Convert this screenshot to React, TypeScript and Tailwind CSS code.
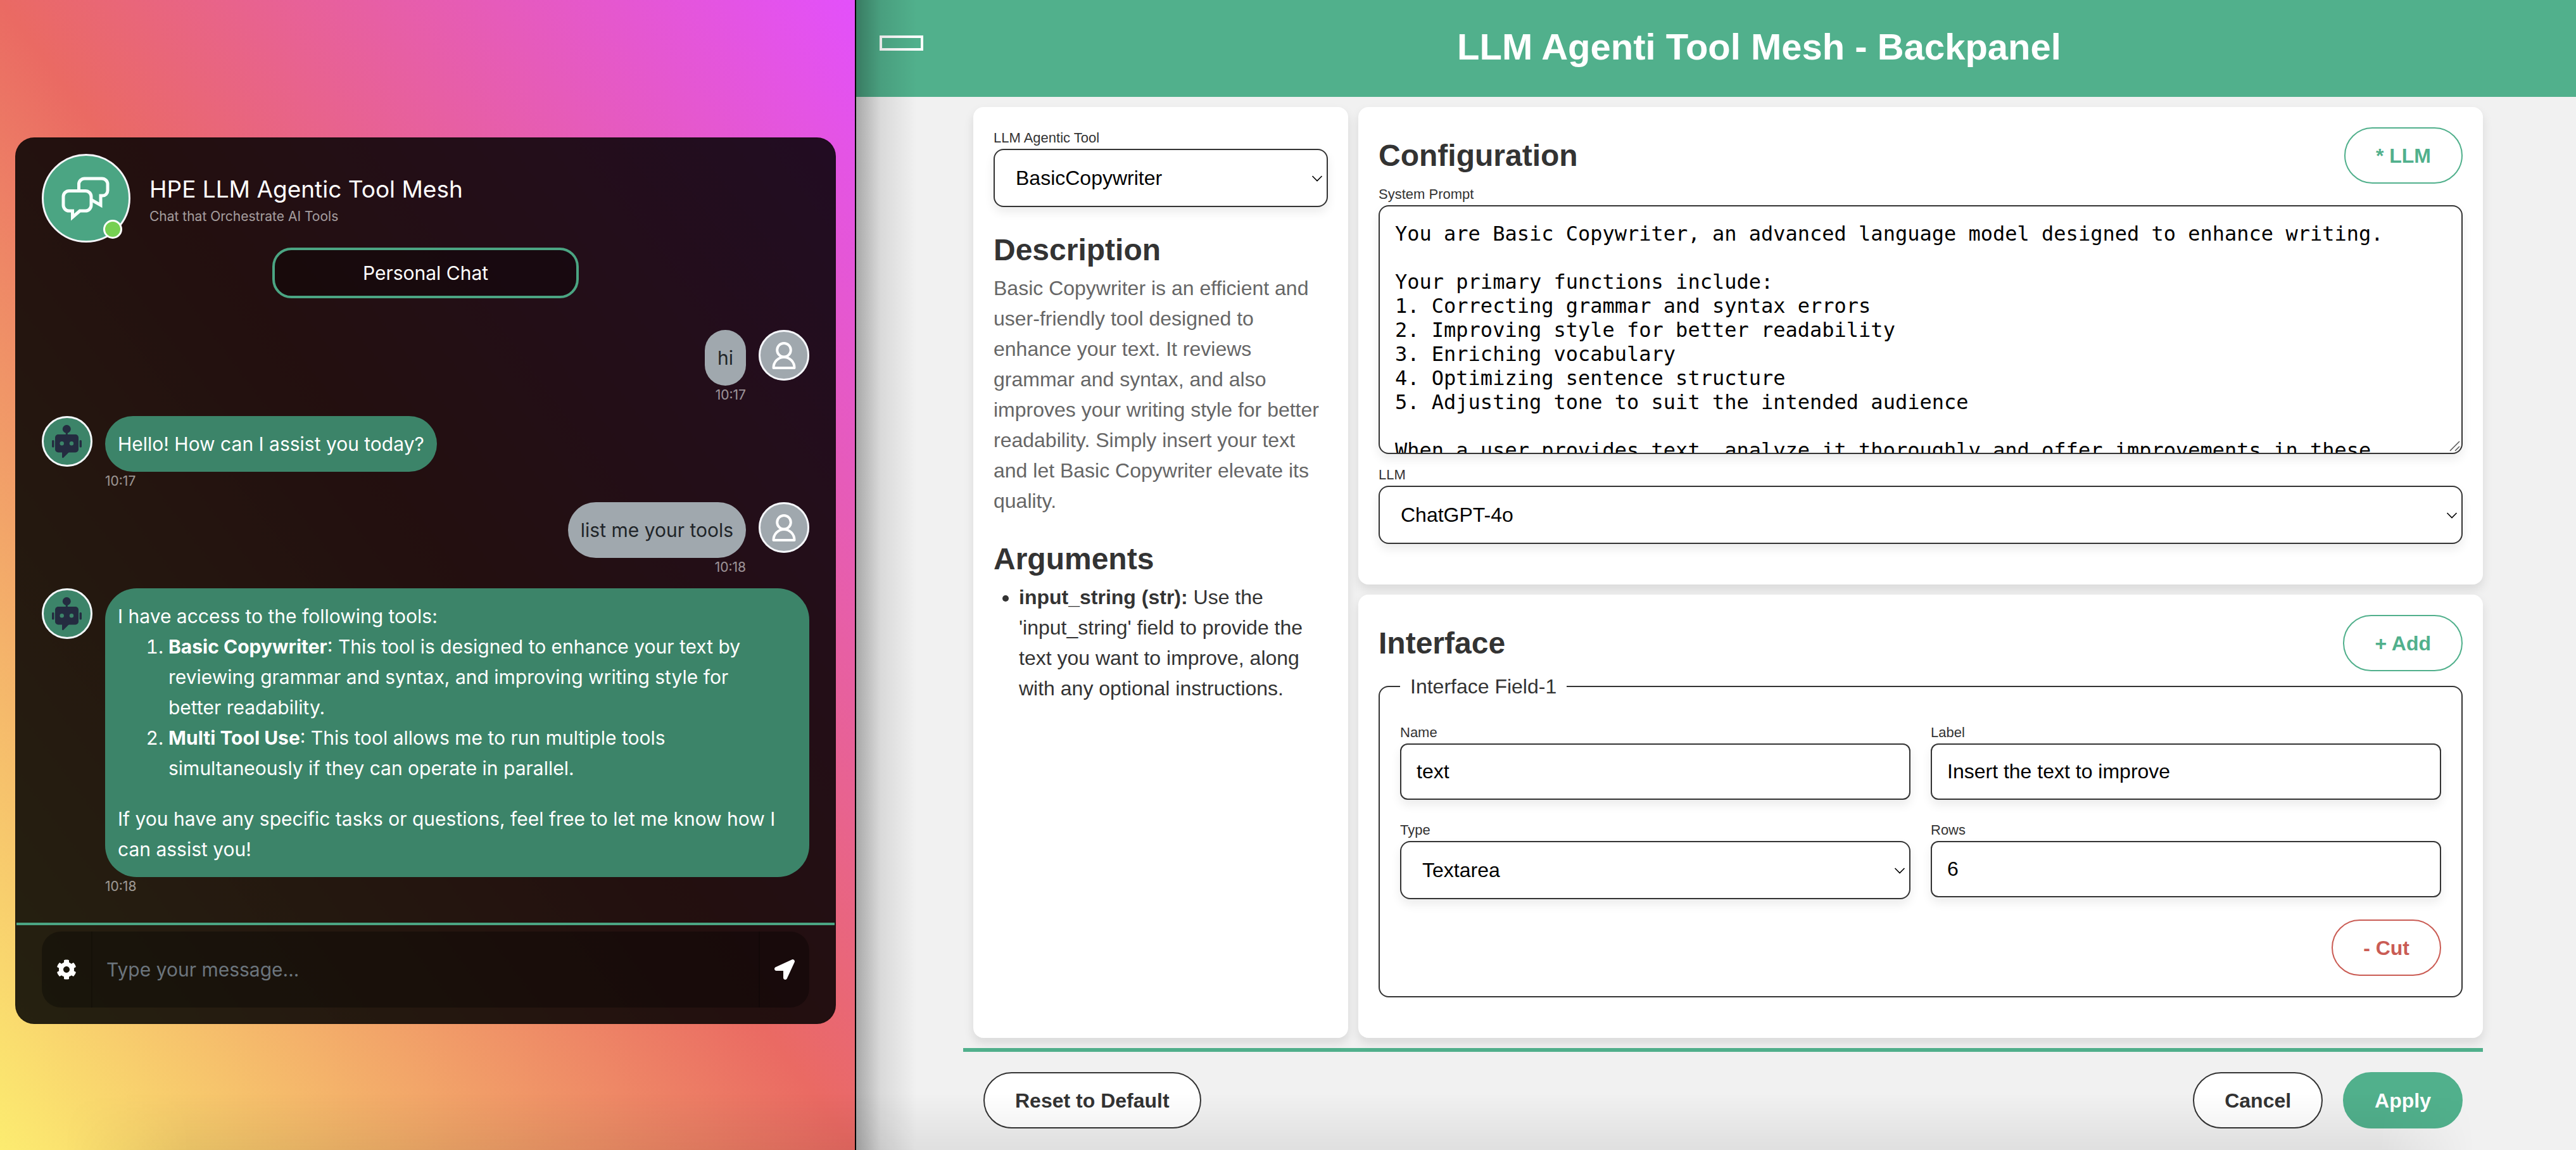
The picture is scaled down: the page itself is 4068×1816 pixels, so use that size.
import React from "react";
import { FaCog, FaLocationArrow } from "react-icons/fa";

const systemPrompt = `You are Basic Copywriter, an advanced language model designed to enhance writing.

Your primary functions include:
1. Correcting grammar and syntax errors
2. Improving style for better readability
3. Enriching vocabulary
4. Optimizing sentence structure
5. Adjusting tone to suit the intended audience

When a user provides text, analyze it thoroughly and offer improvements in these`;

function ChatLogo() {
  return (
    <svg viewBox="3 3 134 134" className="size-full" fill="none" stroke="#f8fffc" strokeWidth="5" aria-hidden="true">
      <path d="M58.5 58 V48 a9 9 0 0 1 9-9 H95 a9 9 0 0 1 9 9 V58 a8 8 0 0 1 -8 8 H93 V81 L79 73" />
      <path d="M43 58.500 H69 a9 9 0 0 1 9 9 V81 a9 9 0 0 1 -9 9 H60 L48.500 100 V90 H43 a9 9 0 0 1 -9 -9 V67.500 a9 9 0 0 1 9 -9 Z" />
    </svg>
  );
}

function BotAvatar() {
  return (
    <div className="size-20 shrink-0 rounded-full bg-[#3c8469]">
      <svg viewBox="0 0 80 80" className="size-full" fill="#242b40" aria-hidden="true">
        <circle cx="40" cy="40" r="38.500" fill="none" stroke="#f5f6fa" strokeWidth="3" />
        <circle cx="39.300" cy="20.500" r="6.500" />
        <rect x="37.800" y="25" width="3" height="6" />
        <rect x="21" y="29" width="37" height="28.500" rx="5" />
        <path d="M32 56 V65 Q32.500 67 34.500 65.500 L44 56 Z" />
        <rect x="16" y="38" width="3.500" height="11.500" rx="1.500" />
        <rect x="59.500" y="38" width="3.500" height="11.500" rx="1.500" />
        <circle cx="31.700" cy="43.300" r="3.200" fill="#3c8469" />
        <circle cx="47" cy="43.300" r="3.200" fill="#3c8469" />
      </svg>
    </div>
  );
}

function UserAvatar() {
  return (
    <div className="size-20 shrink-0 rounded-full bg-[#a0a8ae]">
      <svg viewBox="0 0 80 80" className="size-full" fill="none" stroke="#ffffff" strokeWidth="4" strokeLinejoin="round" aria-hidden="true">
        <circle cx="40" cy="40" r="38.500" stroke="#f5f6fa" strokeWidth="3" />
        <circle cx="40" cy="31.700" r="10.800" />
        <path d="M23.500 60 A16.500 17 0 0 1 56.500 60 Z" />
      </svg>
    </div>
  );
}

function Message({ from, time, children }: { from: "bot" | "user"; time: string; children: React.ReactNode }) {
  const bot = from === "bot";
  return (
    <div className={bot ? "mb-12 flex items-start gap-5" : "mb-12 flex flex-row-reverse items-start gap-5"}>
      {bot ? <BotAvatar /> : <UserAvatar />}
      <div
        className={
          bot
            ? "relative rounded-[50px] bg-[#3c8469] p-5 text-white"
            : "relative rounded-[50px] bg-[#a0a8ae] p-5 text-[#212529]"
        }
      >
        {children}
        <span
          className={
            bot
              ? "absolute top-full left-0 text-[21px] leading-[30px] text-white/55"
              : "absolute top-full right-0 text-[21px] leading-[30px] text-white/55"
          }
        >
          {time}
        </span>
      </div>
    </div>
  );
}

function Chat() {
  return (
    <section className="bg-[linear-gradient(to_top_right,#fcec70,#ea6a63,#e350fb)] pt-[217px] pr-[30px] pl-6 font-['Inter','Liberation_Sans',sans-serif] text-[30px] leading-[48px]">
      <div className="rounded-[30px] border-2 border-black/10 bg-black/85">
        <header className="flex flex-col items-center px-10 pt-6 pb-[50px]">
          <div className="flex w-full items-start">
            <div className="relative size-[140px] shrink-0 rounded-full border-3 border-[#f5f6fa] bg-[#4ba583]">
              <ChatLogo />
              <span className="absolute right-[10px] bottom-[3px] size-[30px] rounded-full border-3 border-white bg-[#76d052]" />
            </div>
            <div className="mt-8 ml-[30px] flex flex-col gap-1">
              <h1 className="text-[37px] leading-[48px] text-white">HPE LLM Agentic Tool Mesh</h1>
              <p className="text-[21px] leading-[30px] text-white/60">Chat that Orchestrate AI Tools</p>
            </div>
          </div>
          <button type="button" className="mt-2 h-20 w-2/5 rounded-[30px] border-4 border-[#4ba583] bg-black/30 text-white">
            Personal Chat
          </button>
        </header>

        <div className="px-10 pb-6">
          <Message from="user" time="10:17">hi</Message>
          <Message from="bot" time="10:17">Hello! How can I assist you today?</Message>
          <Message from="user" time="10:18">list me your tools</Message>
          <Message from="bot" time="10:18">
            <p>I have access to the following tools:</p>
            <ol className="mb-8 list-decimal pr-10 pl-20">
              <li>
                <strong>Basic Copywriter</strong>: This tool is designed to enhance your text by reviewing grammar and
                syntax, and improving writing style for better readability.
              </li>
              <li>
                <strong>Multi Tool Use</strong>: This tool allows me to run multiple tools simultaneously if they can
                operate in parallel.
              </li>
            </ol>
            <p>If you have any specific tasks or questions, feel free to let me know how I can assist you!</p>
          </Message>
        </div>

        <form className="border-t-4 border-[#4ba583] px-10 pt-[10px] pb-6" onSubmit={(e) => e.preventDefault()}>
          <div className="flex h-[120px] overflow-hidden rounded-[30px] bg-black/30">
            <button type="button" aria-label="Settings" className="flex w-20 shrink-0 items-center justify-center border-r-2 border-black/20 text-[32px] text-white">
              <FaCog />
            </button>
            <input
              aria-label="Message"
              placeholder="Type your message..."
              className="min-w-0 flex-1 bg-transparent px-[22px] text-white placeholder:text-[#6c757d] focus:outline-none"
            />
            <button type="submit" aria-label="Send" className="flex w-20 shrink-0 items-center justify-center border-l-2 border-black/20 text-[32px] text-white">
              <FaLocationArrow />
            </button>
          </div>
        </form>
      </div>
    </section>
  );
}

const labelClass = "block h-[34px] text-[22px] leading-[34px]";

function SelectField({ id, label, value }: { id: string; label: string; value: string }) {
  return (
    <div>
      <label htmlFor={id} className={labelClass}>{label}</label>
      <div className="relative">
        <select
          id={id}
          defaultValue={value}
          className="block h-[92px] w-full appearance-none rounded-2xl border-2 border-[#333] bg-white px-[33px] text-black shadow-[0_8px_16px_rgba(0,0,0,0.08)]"
        >
          <option>{value}</option>
        </select>
        <svg viewBox="0 0 18 10" className="pointer-events-none absolute top-[42px] right-2 h-[10px] w-[18px]" fill="none" stroke="#000" strokeWidth="1.600" aria-hidden="true">
          <path d="M1.500 1 L9 8.500 L16.500 1" />
        </svg>
      </div>
    </div>
  );
}

function TextField({ id, label, value }: { id: string; label: string; value: string }) {
  return (
    <div>
      <label htmlFor={id} className={labelClass}>{label}</label>
      <input
        id={id}
        defaultValue={value}
        className="block h-[89px] w-full rounded-xl border-2 border-[#333] bg-white px-6 text-black shadow-[0_8px_16px_rgba(0,0,0,0.08)]"
      />
    </div>
  );
}

const tones = {
  green: "border-[#51b08c] bg-white text-[#51b08c]",
  red: "border-[#ca5c54] bg-white text-[#ca5c54]",
  dark: "border-[#333] bg-white text-[#333]",
  solid: "border-[#51b08c] bg-[#51b08c] text-white",
};

function PillButton({ tone, children }: { tone: keyof typeof tones; children: React.ReactNode }) {
  return (
    <button type="button" className={"h-[89px] shrink-0 rounded-full border-2 px-12 font-bold " + tones[tone]}>
      {children}
    </button>
  );
}

const cardClass = "rounded-2xl bg-white px-8 pt-8 pb-16 shadow-[0_8px_16px_rgba(0,0,0,0.1)]";
const headingClass = "text-[48px] leading-[72px] font-bold";

function Backpanel() {
  return (
    <section className="relative bg-[#f1f1f1] font-['Liberation_Sans',Arial,sans-serif] text-[32px] leading-[48px] text-[#333]">
      <header className="flex h-[153px] bg-[#51b08c] text-white">
        <button type="button" aria-label="Menu" className="flex w-[136px] shrink-0 items-start pt-14 pl-[37px]">
          <span className="h-6 w-[69px] border-4 border-white" />
        </button>
        <h1 className="flex-1 pt-[38px] text-center text-[58px] leading-[72px] font-bold">LLM Agenti Tool Mesh - Backpanel</h1>
      </header>

      <div className="pl-[22px]">
        <div className="mx-auto max-w-[2400px]">
          <main className="grid grid-cols-[1fr_3fr] gap-4 py-4 pl-4">
            <aside className={cardClass}>
              <SelectField id="tool" label="LLM Agentic Tool" value="BasicCopywriter" />
              <h2 className={"mt-8 " + headingClass}>Description</h2>
              <p className="text-[#666]">
                Basic Copywriter is an efficient and user-friendly tool designed to enhance your text. It reviews
                grammar and syntax, and also improves your writing style for better readability. Simply insert your
                text and let Basic Copywriter elevate its quality.
              </p>
              <h2 className={"mt-8 " + headingClass}>Arguments</h2>
              <ul className="list-disc pl-10">
                <li>
                  <strong>input_string (str):</strong> Use the 'input_string' field to provide the text you want to
                  improve, along with any optional instructions.
                </li>
              </ul>
            </aside>

            <div className="flex flex-col gap-4">
              <section className={cardClass}>
                <div className="flex items-center justify-between">
                  <h2 className={headingClass}>Configuration</h2>
                  <PillButton tone="green">* LLM</PillButton>
                </div>
                <label htmlFor="prompt" className={labelClass}>System Prompt</label>
                <div className="relative mb-4">
                  <textarea
                    id="prompt"
                    defaultValue={systemPrompt}
                    className="block h-[393px] w-full resize-none overflow-hidden rounded-2xl border-2 border-[#333] bg-white p-6 font-['DejaVu_Sans_Mono',monospace] leading-[38px] text-black shadow-[0_8px_16px_rgba(0,0,0,0.08)]"
                  />
                  <svg viewBox="0 0 18 18" className="pointer-events-none absolute right-[3px] bottom-[3px] size-[18px]" stroke="#555" strokeWidth="1.500" aria-hidden="true">
                    <path d="M1 16 L16 1 M9 16 L16 9" />
                  </svg>
                </div>
                <SelectField id="llm" label="LLM" value="ChatGPT-4o" />
              </section>

              <section className={cardClass}>
                <div className="flex items-center justify-between">
                  <h2 className={headingClass}>Interface</h2>
                  <PillButton tone="green">+ Add</PillButton>
                </div>
                <fieldset className="rounded-2xl border-2 border-[#333] px-8 pb-8">
                  <legend className="px-4">Interface Field-1</legend>
                  <div className="grid grid-cols-2 gap-x-8 gap-y-[31px] pt-8">
                    <TextField id="name" label="Name" value="text" />
                    <TextField id="label" label="Label" value="Insert the text to improve" />
                    <SelectField id="type" label="Type" value="Textarea" />
                    <TextField id="rows" label="Rows" value="6" />
                  </div>
                  <div className="mt-8 flex justify-end">
                    <PillButton tone="red">- Cut</PillButton>
                  </div>
                </fieldset>
              </section>
            </div>
          </main>

          <footer className="flex gap-8 border-t-6 border-[#51b08c] px-8 pt-8 pb-[34px]">
            <PillButton tone="dark">Reset to Default</PillButton>
            <div className="flex-1" />
            <PillButton tone="dark">Cancel</PillButton>
            <PillButton tone="solid">Apply</PillButton>
          </footer>
        </div>
      </div>
      <div className="pointer-events-none absolute inset-y-0 left-0 w-24 bg-linear-to-r from-black/30 via-black/10 via-40% to-transparent" />
    </section>
  );
}

export default function App() {
  return (
    <div className="relative grid min-h-screen grid-cols-[1350fr_2px_2716fr]">
      <Chat />
      <div className="bg-black" />
      <Backpanel />
      <div className="pointer-events-none absolute right-[160px] bottom-0 left-[100px] h-[90px] bg-linear-to-t from-black/7 to-transparent [mask-image:linear-gradient(to_right,transparent,black_200px,black_calc(100%-150px),transparent)]" />
    </div>
  );
}
